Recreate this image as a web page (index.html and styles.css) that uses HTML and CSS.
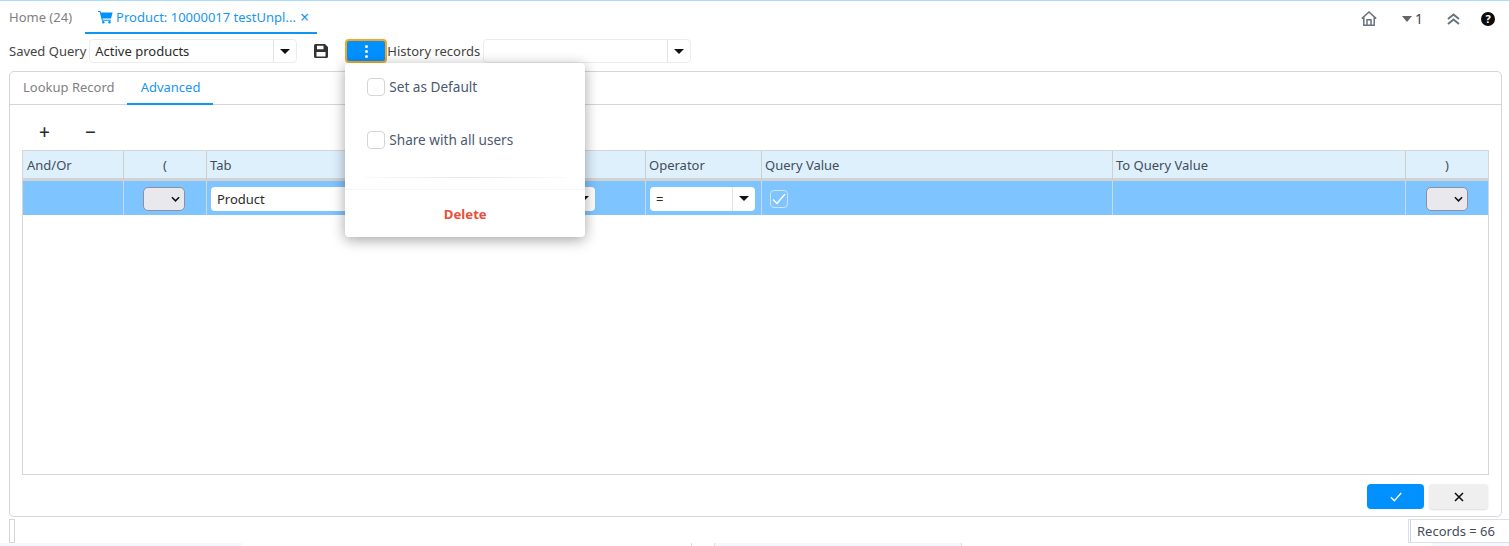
FILE: index.html
```html
<!DOCTYPE html>
<html lang="en">
<head>
<meta charset="utf-8">
<title>Product</title>
<link rel="stylesheet" href="styles.css">
</head>
<body>
<div class="app">
  <header class="tabbar">
    <div class="tabs">
      <div class="tab">Home (24)</div>
      <div class="tab tab-active">
        <svg class="cart" viewBox="0 0 16 14" width="15" height="14"><path fill="#0091ff" d="M0 .5h2.600l.5 1.600H15.600l-1.700 6.600H4.800l.3 1.200h8.700v1.100H4.200L1.800 1.600H0z"/><circle cx="5.600" cy="12.600" r="1.300" fill="#0091ff"/><circle cx="12.300" cy="12.600" r="1.300" fill="#0091ff"/></svg>
        <span>Product: 10000017 testUnpl...</span>
        <span class="tab-close">×</span>
      </div>
    </div>
    <div class="top-icons">
      <svg class="ic-home" viewBox="0 0 16 15" width="16" height="15"><path fill="none" stroke="#69737f" stroke-width="1.500" d="M.8 7.600 8 1l7.200 6.600M2.800 6.400v7.900h10.400V6.400M6 14.300V8.700h4v5.600"/></svg>
      <span class="counter"><svg viewBox="0 0 10 6" width="10" height="6"><path fill="#666" d="M0 0h10L5 6z"/></svg><span>1</span></span>
      <svg class="ic-up" viewBox="0 0 13 12" width="13" height="12"><path fill="none" stroke="#69737f" stroke-width="2" d="M1 6l5.500-4.500L12 6M1 11l5.500-4.500L12 11"/></svg>
      <span class="help">?</span>
    </div>
  </header>

  <div class="toolbar">
    <label class="tool-label">Saved Query</label>
    <div class="combo combo-saved"><span class="combo-text">Active products</span><span class="combo-btn"><i class="caret"></i></span></div>
    <svg class="ic-save" viewBox="0 0 14 14" width="14" height="14"><path fill="#333" fill-rule="evenodd" d="M1.500 0H11l3 3v9.500A1.500 1.500 0 0 1 12.500 14h-11A1.500 1.500 0 0 1 0 12.500v-11A1.500 1.500 0 0 1 1.500 0zM3 1.800v3.400h6.500V1.800zM2.500 8v4.400h9V8z"/></svg>
    <div class="menu-wrap">
      <button class="kebab"><i></i><i></i><i></i></button>
      <div class="menu">
        <label class="menu-check menu-first"><span class="box"></span>Set as Default</label>
        <label class="menu-check menu-second"><span class="box"></span>Share with all users</label>
        <div class="menu-rule"></div>
        <div class="menu-delete">Delete</div>
      </div>
    </div>
    <label class="tool-label history-label">History records</label>
    <div class="combo combo-history"><span class="combo-text"></span><span class="combo-btn"><i class="caret"></i></span></div>
  </div>

  <main class="panel">
    <nav class="subtabs">
      <div class="subtab">Lookup Record</div>
      <div class="subtab subtab-active">Advanced</div>
    </nav>
    <div class="panel-body">
      <div class="plusminus"><span>+</span><span>−</span></div>
      <div class="grid">
        <div class="gr gr-head">
          <div class="cell cell-first">And/Or</div>
          <div class="cell center">(</div>
          <div class="cell">Tab</div>
          <div class="cell"></div>
          <div class="cell">Operator</div>
          <div class="cell">Query Value</div>
          <div class="cell">To Query Value</div>
          <div class="cell center">)</div>
        </div>
        <div class="gr gr-row">
          <div class="cell"></div>
          <div class="cell center"><span class="native native-open"><svg viewBox="0 0 10 6" width="9" height="6"><path fill="none" stroke="#111" stroke-width="1.700" d="M1 1l4 4 4-4"/></svg></span></div>
          <div class="cell pad"><div class="combo combo-row combo-tab"><span class="combo-text">Product</span></div></div>
          <div class="cell pad"><div class="combo combo-row combo-field"><span class="combo-text"></span><span class="combo-btn"><i class="caret"></i></span></div></div>
          <div class="cell pad"><div class="combo combo-row combo-op"><span class="combo-text">=</span><span class="combo-btn"><i class="caret"></i></span></div></div>
          <div class="cell pad"><span class="value-check"><svg viewBox="0 0 14 12" width="14" height="12"><path fill="none" stroke="#fff" stroke-width="1.500" d="M1 6.500l4 4L13 1"/></svg></span></div>
          <div class="cell"></div>
          <div class="cell center"><span class="native"><svg viewBox="0 0 10 6" width="9" height="6"><path fill="none" stroke="#111" stroke-width="1.700" d="M1 1l4 4 4-4"/></svg></span></div>
        </div>
      </div>
      <div class="actions">
        <button class="btn btn-ok"><svg viewBox="0 0 12 10" width="12" height="10"><path fill="none" stroke="#fff" stroke-width="1.400" d="M.8 5.200l3.600 3.600L11.200 1"/></svg></button>
        <button class="btn btn-cancel"><svg viewBox="0 0 10 10" width="10" height="10"><path fill="none" stroke="#111" stroke-width="1.600" d="M1 1l8 8M9 1l-8 8"/></svg></button>
      </div>
    </div>
  </main>

  <footer class="statusbar">
    <div class="status-left"></div>
    <div class="status-right">Records = 66</div>
  </footer>
  <div class="strip">
    <span class="seg seg-a"></span>
    <span class="tick tick-a"></span>
    <span class="tick tick-b"></span>
    <span class="seg seg-b"></span>
    <span class="tick tick-c"></span>
    <span class="seg seg-c"></span>
  </div>
</div>
</body>
</html>
```
FILE: styles.css
```css
* { box-sizing: border-box; }
html, body { margin: 0; height: 546px; overflow: hidden; background: #fff; }
body { font-family: "Noto Sans", "Open Sans", sans-serif; font-size: 13px; color: #3f3f3f; }
.app { display: flex; flex-direction: column; height: 546px; border-top: 1px solid #a8dcfb; }

.tabbar { display: flex; justify-content: space-between; height: 33px; padding-left: 9px; }
.tabs { display: flex; }
.tab { display: flex; align-items: center; height: 33px; padding-bottom: 1px; color: #7f7f7f; margin-right: 13px; line-height: 18px; white-space: nowrap; }
.tab-active { width: 232px; padding-left: 13px; color: #1a96ee; border-bottom: 2px solid #0e96f2; padding-bottom: 0; }
.cart { margin-right: 3px; }
.tab-close { margin-left: 4px; font-size: 16px; line-height: 16px; }
.top-icons { display: flex; align-items: center; padding-right: 14px; height: 35px; }
.ic-home { margin-right: 25px; }
.counter { display: flex; align-items: center; gap: 3px; font-size: 14px; margin-right: 24px; color: #444; }
.ic-up { margin-right: 21px; }
.help { width: 14px; height: 14px; border-radius: 50%; background: #0b0b0b; color: #fff; font-size: 11px; font-weight: 700; line-height: 14px; text-align: center; }

.toolbar { display: flex; align-items: center; height: 24px; margin-top: 5px; padding-left: 9px; }
.tool-label { white-space: nowrap; color: #444; }
.combo { display: flex; align-items: center; height: 24px; background: #fff; border: 1px solid #ececec; border-radius: 4px; }
.combo-text { flex: 1; padding-left: 5px; color: #2b2b2b; white-space: nowrap; overflow: hidden; }
.combo-btn { display: flex; align-items: center; justify-content: center; width: 23px; height: 100%; border-left: 1px solid #e4e4e4; }
.caret { width: 0; height: 0; border-left: 5px solid transparent; border-right: 5px solid transparent; border-top: 5px solid #111; }
.combo-saved { width: 208px; margin-left: 3px; }
.ic-save { margin-left: 17px; }
.menu-wrap { position: relative; margin-left: 17px; height: 24px; }
.kebab { display: flex; flex-direction: column; align-items: center; justify-content: center; gap: 2px; width: 42px; height: 24px; padding: 0; background: #0091ff; border: 2px solid #f5a623; border-radius: 4px; }
.kebab i { width: 3px; height: 3px; border-radius: 50%; background: #fff; }
.menu { position: absolute; left: 0; top: 24px; z-index: 5; width: 240px; height: 174px; background: #fff; border-radius: 4px; box-shadow: 0 3px 14px rgba(0,0,0,.36); }
.menu-check { position: absolute; left: 22px; display: flex; align-items: center; gap: 4px; font-size: 13.6px; color: #4a5a70; }
.menu-first { top: 14px; }
.menu-second { top: 67px; }
.box { width: 18px; height: 18px; border: 1px solid #d5d5d5; border-radius: 4px; background: #fff; }
.menu-rule { position: absolute; left: 20px; right: 20px; top: 114px; height: 1px; background: linear-gradient(90deg, #fafafa, #e8e8e8 50%, #fafafa); }
.menu-delete { position: absolute; left: 0; right: 0; top: 126px; padding-top: 14px; border-top: 1px solid #f5f5f5; text-align: center; font-size: 13.2px; font-weight: 700; color: #ea4d3a; line-height: 20px; height: 48px; }
.history-label { margin-left: 0; }
.combo-history { width: 208px; margin-left: 3px; }

.panel { display: flex; flex-direction: column; height: 446px; margin: 8px 7px 0 9px; border: 1px solid #d6d6d6; border-radius: 5px; }
.subtabs { display: flex; height: 33px; border-bottom: 1px solid #d6d6d6; padding-left: 13px; }
.subtab { height: 33px; line-height: 30px; color: #7f7f7f; margin-right: 12px; }
.subtab-active { width: 86px; text-align: center; padding-left: 2px; color: #1a96ee; border-bottom: 2px solid #0e96f2; }
.panel-body { flex: 1; padding: 0 12px; display: flex; flex-direction: column; }
.plusminus { display: flex; height: 45px; padding: 15px 0 0 17px; gap: 36px; font-size: 19px; font-weight: 500; line-height: 24px; color: #2b2b2b; }
.plusminus span { width: 10px; text-align: center; }
.grid { height: 325px; border: 1px solid #d6d6d6; width: 1467px; }
.gr { display: grid; grid-template-columns: 101px 83px 194px 245px 116px 351px 293px 1fr; }
.gr-head { height: 30px; background: #dff0fd; border-bottom: 3px solid #d2d2d2; color: #434d5a; }
.gr-head .cell { line-height: 29px; padding-left: 3px; border-right: 1px solid #cfcfcf; }
.gr-head .cell-first { padding-left: 4px; }
.gr-row { height: 34px; background: #7ec4ff; }
.gr-row .cell { display: flex; align-items: center; border-right: 1px solid #c9d9e6; padding-top: 1px; }
.cell:last-child { border-right: 0 !important; }
.center { justify-content: center; text-align: center; padding-left: 0 !important; }
.pad { padding-left: 4px; }
.native { display: flex; align-items: center; justify-content: flex-end; padding-right: 4px; width: 42px; height: 24px; background: #e9e9ed; border: 1px solid #8f8f9d; border-radius: 5px; }
.native-open { margin-right: 2px; }
.combo-row { border: 0; height: 24px; }
.combo-row .combo-text { padding-left: 6px; }
.combo-tab { width: 300px; }
.combo-field { width: 191px; margin-left: -1px; }
.combo-op { width: 105px; }
.value-check { display: flex; align-items: center; justify-content: center; width: 18px; height: 18px; margin-left: 4px; border: 1px solid #cfe3f4; border-radius: 4px; }
.actions { display: flex; justify-content: flex-end; gap: 5px; padding: 9px 1px 0 0; }
.btn { display: flex; align-items: center; justify-content: center; height: 25px; width: 57px; border: 0; border-radius: 4px; padding: 0; }
.btn-ok { background: #0091ff; }
.btn-cancel { width: 59px; background: #efefef; box-shadow: 0 1px 2px rgba(0,0,0,.14); }

.statusbar { display: flex; justify-content: space-between; margin-top: 2px; height: 24px; padding-left: 9px; }
.status-left { width: 6px; height: 24px; border: 1px solid #d6d6d6; }
.status-right { width: 101px; height: 24px; padding-left: 8px; line-height: 22px; border: 1px solid #d9e0ea; border-right: 0; box-shadow: inset 1px 0 0 #fff, inset 2px 0 0 #c8d2e6; color: #434d5a; }

.strip { display: flex; height: 3px; }
.seg { display: block; height: 3px; background: #f6f8fe; }
.tick { display: block; width: 1px; height: 3px; background: #dcdcdc; }
.seg-a { width: 242px; margin-right: 449px; }
.tick-b { margin-left: 22px; }
.seg-b { width: 246px; }
.seg-c { width: 76px; margin-left: 471px; }
```
